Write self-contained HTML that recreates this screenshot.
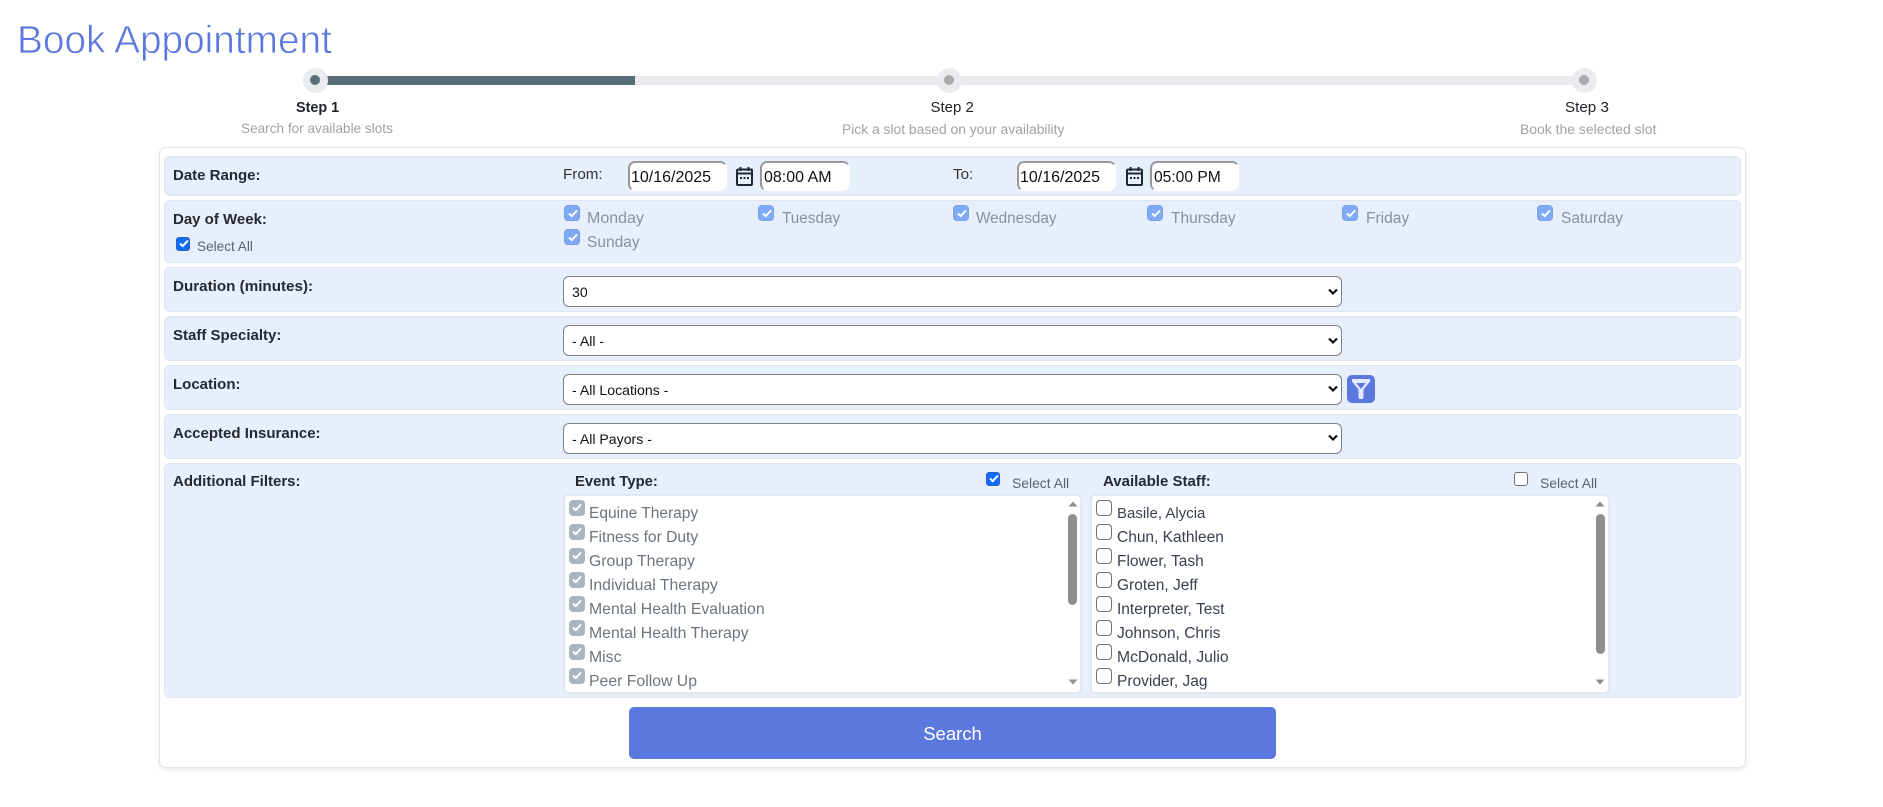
<!DOCTYPE html>
<html lang="en">
<head>
<meta charset="utf-8">
<title>Book Appointment</title>
<style>
html,body{margin:0;padding:0;background:#fff;width:1883px;height:807px;overflow:hidden;font-family:"Liberation Sans",sans-serif;color:#212529}
*{box-sizing:border-box}
.a{position:absolute}
.t{position:absolute;white-space:nowrap;line-height:20px;height:20px}
h1{position:absolute;left:17px;top:18px;margin:0;font-size:38.8px;line-height:46px;font-weight:400;color:#5b78de;-webkit-text-stroke:.7px #fff;white-space:nowrap}
.c{position:absolute;width:25px;height:25px;border-radius:50%;background:#e9ebef;top:67.5px}
.c i{position:absolute;left:7.5px;top:7.5px;width:10px;height:10px;border-radius:50%;background:#aaa}
.s{font-size:15.2px;color:#212529}
.sub{font-size:13.6px;color:#a2a2a2}
.card{position:absolute;left:159px;top:147px;width:1587px;height:621px;background:#fff;border:1px solid #e6e6e6;border-radius:7px;box-shadow:0 2px 5px rgba(0,0,0,.09)}
.row{position:absolute;left:164px;width:1577px;background:#e7eefc;border:1px solid #dfe4ee;border-radius:6px}
.l{font-size:15px;font-weight:700;color:#262a30;left:173px}
.n{font-size:15.2px;color:#333}
input.i{position:absolute;top:161px;height:30px;border-style:solid;border-width:2px 1px 1px 2px;border-color:#999 #fff #fff #999;border-radius:7px;background:#fff;font:16px "Liberation Sans",sans-serif;color:#111;padding:2px 0 0 1px;outline:0}
.sel{position:absolute;left:563px;width:779px;height:31px;border:1px solid #808080;border-radius:6px;background:#fff;font:14.1px "Liberation Sans",sans-serif;color:#111;padding:0 0 0 8px;appearance:none;-webkit-appearance:none;outline:0}
.chev{position:absolute;left:1327px;width:12px;height:8px}
.cb{position:absolute;display:block;width:16px;height:16px;border-radius:4px}
.cb svg{position:absolute;left:0;top:0;width:16px;height:14px}
.d{background:#7faaf5;border:1px solid #79a3ee}
.g{background:#aab6bd}
.u{background:#fff;border:1px solid #6f6f6f}
.p{width:14px;height:14px;background:#0d6efd;border:1px solid #2b5fc0;border-radius:3px}
.p svg{left:-1px;top:-2px}
.day{font-size:15.5px;color:#8b9199}
.list{position:absolute;top:494px;height:200px;background:#fff;border:2px solid #e1e6f0;border-radius:5px}
.ev{font-size:15.8px;color:#6c757d}
.st{font-size:15.5px;color:#39424e}
.sa{font-size:13.9px;color:#59626d}
.thumb{position:absolute;width:9px;top:514px;background:#8e8e8e;border-radius:5px}
.btn{position:absolute;left:629px;top:707px;width:647px;height:52px;background:#5b78de;border:0;border-radius:5px;color:#fff;font:18.5px "Liberation Sans",sans-serif;padding:2px 0 0}
</style>
</head>
<body>
<h1>Book Appointment</h1>

<div class="a" style="left:326px;top:76px;width:1250px;height:9px;background:#e9ebef"></div>
<div class="a" style="left:326px;top:76px;width:309px;height:9px;background:#566d78"></div>
<div class="c" style="left:302.5px"><i style="background:#566d78"></i></div>
<div class="c" style="left:936.5px"><i></i></div>
<div class="c" style="left:1571.5px"><i></i></div>

<div class="t s" style="left:296px;top:98px;font-size:14.4px;font-weight:700">Step 1</div>
<div class="t sub" style="left:241px;top:119px">Search for available slots</div>
<div class="t s" style="left:930.500px;top:98px;font-size:15px">Step 2</div>
<div class="t sub" style="left:842px;top:119px;font-size:13.85px">Pick a slot based on your availability</div>
<div class="t s" style="left:1565px;top:98px">Step 3</div>
<div class="t sub" style="left:1520px;top:119px;font-size:13.95px">Book the selected slot</div>

<div class="card"></div>
<div class="row" style="top:156px;height:40px"></div>
<div class="row" style="top:200px;height:63px"></div>
<div class="row" style="top:267px;height:45px"></div>
<div class="row" style="top:316px;height:45px"></div>
<div class="row" style="top:365px;height:45px"></div>
<div class="row" style="top:414px;height:45px"></div>
<div class="row" style="top:463px;height:235px"></div>

<div class="t l" style="top:166px">Date Range:</div>
<div class="t l" style="top:210px">Day of Week:</div>
<div class="t l" style="top:277px;font-size:15.2px">Duration (minutes):</div>
<div class="t l" style="top:326px">Staff Specialty:</div>
<div class="t l" style="top:375px">Location:</div>
<div class="t l" style="top:424px">Accepted Insurance:</div>
<div class="t l" style="top:472px">Additional Filters:</div>

<span class="cb p" style="left:176px;top:237px"><svg viewBox="0 0 16 14"><path d="M4 7.500l2.700 2.600L12 4.500" fill="none" stroke="#fff" stroke-width="2"/></svg></span>
<div class="t sa" style="left:197px;top:237px;font-size:13.6px">Select All</div>

<!-- Date range -->
<div class="t n" style="left:563px;top:165px">From:</div>
<input class="i" style="left:628px;width:99px" value="10/16/2025">
<svg class="a" style="left:735px;top:166px" width="19" height="20" viewBox="0 0 19 20"><path d="M2 4.500a1 1 0 0 1 1-1h13a1 1 0 0 1 1 1V18a1 1 0 0 1-1 1H3a1 1 0 0 1-1-1zM2 7.500h15M5.500 1v4M13.500 1v4" fill="none" stroke="#1f2733" stroke-width="2"/><path d="M5 11h2v2H5zM8.500 11h2v2h-2zM12 11h2v2h-2z" fill="#1f2733"/></svg>
<input class="i" style="left:760px;width:90px;padding-left:2px" value="08:00 AM">
<div class="t n" style="left:953px;top:165px">To:</div>
<input class="i" style="left:1017px;width:99px" value="10/16/2025">
<svg class="a" style="left:1125px;top:166px" width="19" height="20" viewBox="0 0 19 20"><path d="M2 4.500a1 1 0 0 1 1-1h13a1 1 0 0 1 1 1V18a1 1 0 0 1-1 1H3a1 1 0 0 1-1-1zM2 7.500h15M5.500 1v4M13.500 1v4" fill="none" stroke="#1f2733" stroke-width="2"/><path d="M5 11h2v2H5zM8.500 11h2v2h-2zM12 11h2v2h-2z" fill="#1f2733"/></svg>
<input class="i" style="left:1150px;width:89px;padding-left:2px;font-size:15.6px" value="05:00 PM">

<!-- Days -->
<span class="cb d" style="left:564px;top:205px"><svg viewBox="0 0 16 14"><path d="M4 7.500l2.700 2.600L12 4.500" fill="none" stroke="#fff" stroke-width="2"/></svg></span>
<div class="t day" style="left:587px;top:209px;font-size:16px">Monday</div>
<span class="cb d" style="left:758px;top:205px"><svg viewBox="0 0 16 14"><path d="M4 7.500l2.700 2.600L12 4.500" fill="none" stroke="#fff" stroke-width="2"/></svg></span>
<div class="t day" style="left:782px;top:209px;font-size:15.3px">Tuesday</div>
<span class="cb d" style="left:953px;top:205px"><svg viewBox="0 0 16 14"><path d="M4 7.500l2.700 2.600L12 4.500" fill="none" stroke="#fff" stroke-width="2"/></svg></span>
<div class="t day" style="left:976px;top:209px;font-size:15.3px">Wednesday</div>
<span class="cb d" style="left:1147px;top:205px"><svg viewBox="0 0 16 14"><path d="M4 7.500l2.700 2.600L12 4.500" fill="none" stroke="#fff" stroke-width="2"/></svg></span>
<div class="t day" style="left:1171px;top:209px">Thursday</div>
<span class="cb d" style="left:1342px;top:205px"><svg viewBox="0 0 16 14"><path d="M4 7.500l2.700 2.600L12 4.500" fill="none" stroke="#fff" stroke-width="2"/></svg></span>
<div class="t day" style="left:1366px;top:209px">Friday</div>
<span class="cb d" style="left:1537px;top:205px"><svg viewBox="0 0 16 14"><path d="M4 7.500l2.700 2.600L12 4.500" fill="none" stroke="#fff" stroke-width="2"/></svg></span>
<div class="t day" style="left:1561px;top:209px">Saturday</div>
<span class="cb d" style="left:564px;top:229px"><svg viewBox="0 0 16 14"><path d="M4 7.500l2.700 2.600L12 4.500" fill="none" stroke="#fff" stroke-width="2"/></svg></span>
<div class="t day" style="left:587px;top:233px">Sunday</div>

<!-- Selects -->
<select class="sel" style="top:276px"><option>30</option></select>
<svg class="chev" style="top:288px" viewBox="0 0 12 8"><path d="M2 1.500l4 4 4-4" fill="none" stroke="#111" stroke-width="2.200"/></svg>
<select class="sel" style="top:325px"><option>- All -</option></select>
<svg class="chev" style="top:337px" viewBox="0 0 12 8"><path d="M2 1.500l4 4 4-4" fill="none" stroke="#111" stroke-width="2.200"/></svg>
<select class="sel" style="top:374px"><option>- All Locations -</option></select>
<svg class="chev" style="top:385px" viewBox="0 0 12 8"><path d="M2 1.500l4 4 4-4" fill="none" stroke="#111" stroke-width="2.200"/></svg>
<select class="sel" style="top:423px"><option>- All Payors -</option></select>
<svg class="chev" style="top:434px" viewBox="0 0 12 8"><path d="M2 1.500l4 4 4-4" fill="none" stroke="#111" stroke-width="2.200"/></svg>

<!-- Filter button -->
<div class="a" style="left:1347px;top:375px;width:28px;height:28px;background:#5b78de;border-radius:5px">
<svg class="a" style="left:0;top:0" width="28" height="28" viewBox="0 0 28 28"><path fill-rule="evenodd" d="M5 4h18v2.500l-6.500 8v8a1.500 1.500 0 0 1-1.500 1.500h-2a1.500 1.500 0 0 1-1.500-1.500v-8L5 6.500zM9.200 8l4.800 6 4.800-6z" fill="#e4e9ff"/></svg>
</div>

<!-- Additional filters -->
<div class="t l" style="left:575px;top:472px;font-size:14.8px">Event Type:</div>
<span class="cb p" style="left:986px;top:472px"><svg viewBox="0 0 16 14"><path d="M4 7.500l2.700 2.600L12 4.500" fill="none" stroke="#fff" stroke-width="2"/></svg></span>
<div class="t sa" style="left:1012px;top:473px">Select All</div>
<div class="t l" style="left:1103px;top:472px">Available Staff:</div>
<span class="cb u" style="left:1514px;top:472px;width:14px;height:14px;border-radius:3px"></span>
<div class="t sa" style="left:1540px;top:473px">Select All</div>

<div class="list" style="left:563px;width:519px"></div>
<div class="list" style="left:1090px;width:520px"></div>

<span class="cb g" style="left:569px;top:500px"><svg viewBox="0 0 16 14"><path d="M4 7.500l2.700 2.600L12 4.500" fill="none" stroke="#fff" stroke-width="2"/></svg></span><div class="t ev" style="left:589px;top:504px;font-size:15.5px">Equine Therapy</div>
<span class="cb g" style="left:569px;top:524px"><svg viewBox="0 0 16 14"><path d="M4 7.500l2.700 2.600L12 4.500" fill="none" stroke="#fff" stroke-width="2"/></svg></span><div class="t ev" style="left:589px;top:528px;font-size:15.6px">Fitness for Duty</div>
<span class="cb g" style="left:569px;top:548px"><svg viewBox="0 0 16 14"><path d="M4 7.500l2.700 2.600L12 4.500" fill="none" stroke="#fff" stroke-width="2"/></svg></span><div class="t ev" style="left:589px;top:552px">Group Therapy</div>
<span class="cb g" style="left:569px;top:572px"><svg viewBox="0 0 16 14"><path d="M4 7.500l2.700 2.600L12 4.500" fill="none" stroke="#fff" stroke-width="2"/></svg></span><div class="t ev" style="left:589px;top:576px">Individual Therapy</div>
<span class="cb g" style="left:569px;top:596px"><svg viewBox="0 0 16 14"><path d="M4 7.500l2.700 2.600L12 4.500" fill="none" stroke="#fff" stroke-width="2"/></svg></span><div class="t ev" style="left:589px;top:600px">Mental Health Evaluation</div>
<span class="cb g" style="left:569px;top:620px"><svg viewBox="0 0 16 14"><path d="M4 7.500l2.700 2.600L12 4.500" fill="none" stroke="#fff" stroke-width="2"/></svg></span><div class="t ev" style="left:589px;top:624px">Mental Health Therapy</div>
<span class="cb g" style="left:569px;top:644px"><svg viewBox="0 0 16 14"><path d="M4 7.500l2.700 2.600L12 4.500" fill="none" stroke="#fff" stroke-width="2"/></svg></span><div class="t ev" style="left:589px;top:648px">Misc</div>
<span class="cb g" style="left:569px;top:668px"><svg viewBox="0 0 16 14"><path d="M4 7.500l2.700 2.600L12 4.500" fill="none" stroke="#fff" stroke-width="2"/></svg></span><div class="t ev" style="left:589px;top:672px">Peer Follow Up</div>

<span class="cb u" style="left:1096px;top:500px"></span><div class="t st" style="left:1117px;top:504px;font-size:15px">Basile, Alycia</div>
<span class="cb u" style="left:1096px;top:524px"></span><div class="t st" style="left:1117px;top:528px">Chun, Kathleen</div>
<span class="cb u" style="left:1096px;top:548px"></span><div class="t st" style="left:1117px;top:552px">Flower, Tash</div>
<span class="cb u" style="left:1096px;top:572px"></span><div class="t st" style="left:1117px;top:576px">Groten, Jeff</div>
<span class="cb u" style="left:1096px;top:596px"></span><div class="t st" style="left:1117px;top:600px">Interpreter, Test</div>
<span class="cb u" style="left:1096px;top:620px"></span><div class="t st" style="left:1117px;top:624px">Johnson, Chris</div>
<span class="cb u" style="left:1096px;top:644px"></span><div class="t st" style="left:1117px;top:648px;font-size:15.7px">McDonald, Julio</div>
<span class="cb u" style="left:1096px;top:668px"></span><div class="t st" style="left:1117px;top:672px">Provider, Jag</div>

<div class="thumb" style="left:1068px;height:91px"></div>
<div class="thumb" style="left:1596px;height:140px"></div>
<svg class="a" style="left:1068px;top:501px" width="10" height="6" viewBox="0 0 10 6"><path d="M5 .5L9.500 5.500H.5z" fill="#8e8e8e"/></svg>
<svg class="a" style="left:1068px;top:679px" width="10" height="6" viewBox="0 0 10 6"><path d="M5 5.500L9.500 .5H.5z" fill="#8e8e8e"/></svg>
<svg class="a" style="left:1595px;top:501px" width="10" height="6" viewBox="0 0 10 6"><path d="M5 .5L9.500 5.500H.5z" fill="#8e8e8e"/></svg>
<svg class="a" style="left:1595px;top:679px" width="10" height="6" viewBox="0 0 10 6"><path d="M5 5.500L9.500 .5H.5z" fill="#8e8e8e"/></svg>

<button class="btn">Search</button>
</body>
</html>
